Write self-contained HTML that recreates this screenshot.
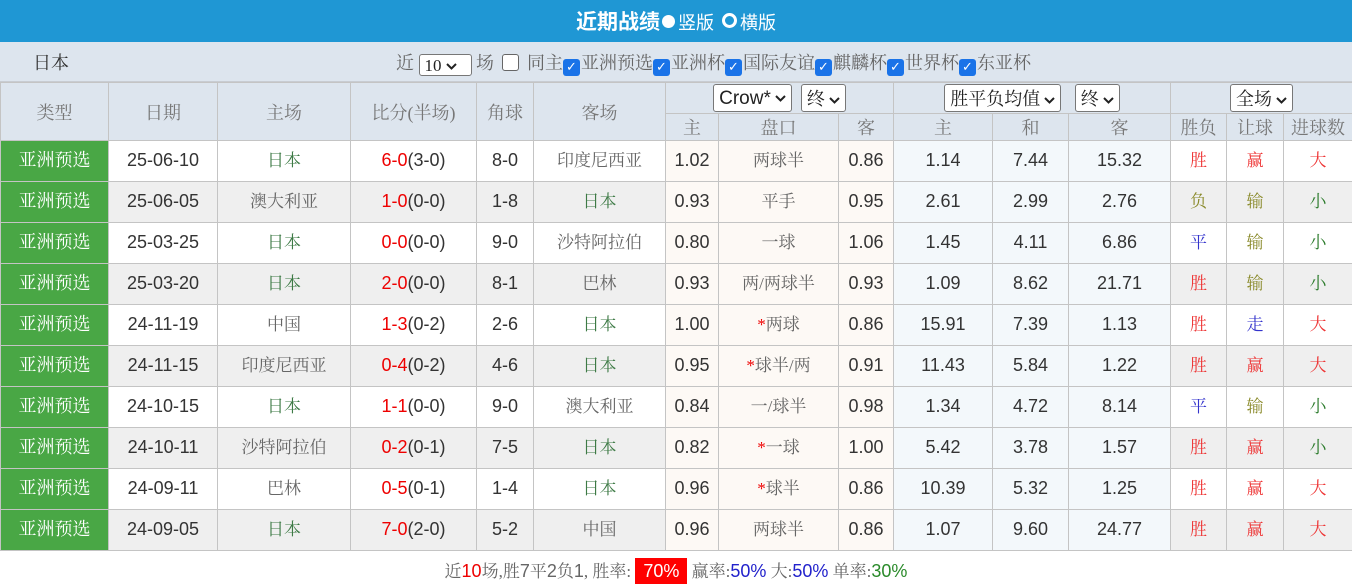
<!DOCTYPE html><html><head><meta charset="utf-8"><style>
body{margin:0;width:1352px;height:583px;overflow:hidden;background:#fff;font-family:"Liberation Sans","Noto Sans CJK SC",sans-serif;}
.top{height:42px;background:#1f97d4;color:#fff;text-align:center;line-height:42px;font-size:18px;}
.top b{font-size:21px;font-family:"Noto Sans CJK SC",sans-serif}
.dot{display:inline-block;width:13px;height:13px;border-radius:50%;background:#fff;vertical-align:1px;margin:0 3px 0 2px}
.ring{display:inline-block;width:9px;height:9px;border-radius:50%;border:3px solid #fff;background:#1f97d4;vertical-align:1px;margin:0 3px 0 8px}
.filter{height:40px;background:#dde5ee;position:relative;font-family:"Liberation Serif","Noto Serif CJK SC",serif;color:#666;font-size:18px;border-bottom:1px solid #c8ccd2;box-sizing:border-box}
.filter .t{position:absolute;left:33px;top:7px;color:#333}
.filter .r{position:absolute;left:396px;top:7px;white-space:nowrap}
.sel{display:inline-block;border:1px solid #777;border-radius:3px;background:#fff;color:#222;padding:0 5px;height:22px;line-height:22px;vertical-align:middle;font-size:15px;box-sizing:border-box}
.chev{display:inline-block;width:11px;height:7px;vertical-align:middle;margin-left:4px}
.cb{display:inline-block;width:17px;height:17px;border-radius:3px;background:#1a73e8;color:#fff;font-size:13px;line-height:17px;text-align:center;vertical-align:-2px;font-family:"DejaVu Sans",sans-serif;font-weight:bold;margin-right:1px}
.cb0{display:inline-block;width:17px;height:17px;border-radius:3px;border:1px solid #666;background:#fff;vertical-align:-2px;box-sizing:border-box;margin:0 8px}
table{border-collapse:collapse;table-layout:fixed;width:1352px;position:absolute;top:82px;left:0}
td{border:1px solid #c4c4c4;text-align:center;padding:0;font-size:18px;color:#333;white-space:nowrap;overflow:hidden}
.h td{background:#dde5ee;color:#777;font-family:"Liberation Serif","Noto Serif CJK SC",serif}
tr.d td{height:40px;line-height:38px;vertical-align:top}
tr.d td.zh{font-family:"Liberation Serif","Noto Serif CJK SC",serif;color:#666;font-size:17px;line-height:39px}
tr.d td.jp{color:#3d7a45}
tr.g td{background:#efefef}
tr.d td.ty{background:#49a745;color:#fff;font-family:"Liberation Serif","Noto Serif CJK SC",serif;line-height:39px}
tr.d td.o{background:#fdf9f5}
tr.d td.p{background:#f3f8fb}
.red{color:#e00}
tr.d td.w{color:#e33}tr.d td.l{color:#8a8a2a}tr.d td.dr{color:#33c}tr.d td.sm{color:#2a7a2a}
.foot{position:absolute;top:557px;left:0;width:1352px;text-align:center;font-size:17px;color:#666;font-family:"Liberation Serif","Noto Serif CJK SC",serif}
.foot .n{font-family:"Liberation Sans",sans-serif;font-size:18px}
</style></head><body>
<div class="top"><b>近期战绩</b><span class="dot"></span>竖版<span class="ring"></span>横版</div>
<div class="filter"><span class="t">日本</span><span class="r">近 <span class="sel" style="width:53px;font-size:17px">10<svg class="chev" viewBox="0 0 11 7"><path d="M1 1L5.5 5.5L10 1" stroke="#222" stroke-width="2" fill="none"/></svg></span> 场<span class="cb0"></span>同主<span class="cb">✓</span>亚洲预选<span class="cb">✓</span>亚洲杯<span class="cb">✓</span>国际友谊<span class="cb">✓</span>麒麟杯<span class="cb">✓</span>世界杯<span class="cb">✓</span>东亚杯</span></div>
<table>
<colgroup><col style="width:108px"><col style="width:109px"><col style="width:133px"><col style="width:126px"><col style="width:57px"><col style="width:132px"><col style="width:53px"><col style="width:120px"><col style="width:55px"><col style="width:99px"><col style="width:76px"><col style="width:102px"><col style="width:56px"><col style="width:57px"><col style="width:69px"></colgroup>
<tr class="h"><td rowspan="2" style="height:56px">类型</td><td rowspan="2">日期</td><td rowspan="2">主场</td><td rowspan="2">比分(半场)</td><td rowspan="2">角球</td><td rowspan="2">客场</td>
<td colspan="3" style="height:30px"><span class="sel" style="font-family:'Liberation Sans',sans-serif;height:28px;line-height:28px;font-size:19px;color:#222">Crow*<svg class="chev" viewBox="0 0 11 7"><path d="M1 1L5.5 5.5L10 1" stroke="#222" stroke-width="2" fill="none"/></svg></span> &nbsp;<span class="sel" style="height:28px;line-height:28px;font-size:18px">终<svg class="chev" viewBox="0 0 11 7"><path d="M1 1L5.5 5.5L10 1" stroke="#222" stroke-width="2" fill="none"/></svg></span></td>
<td colspan="3"><span class="sel" style="height:28px;line-height:28px;font-size:18px">胜平负均值<svg class="chev" viewBox="0 0 11 7"><path d="M1 1L5.5 5.5L10 1" stroke="#222" stroke-width="2" fill="none"/></svg></span> &nbsp;&nbsp;<span class="sel" style="height:28px;line-height:28px;font-size:18px">终<svg class="chev" viewBox="0 0 11 7"><path d="M1 1L5.5 5.5L10 1" stroke="#222" stroke-width="2" fill="none"/></svg></span></td>
<td colspan="3"><span class="sel" style="height:28px;line-height:28px;font-size:18px">全场<svg class="chev" viewBox="0 0 11 7"><path d="M1 1L5.5 5.5L10 1" stroke="#222" stroke-width="2" fill="none"/></svg></span></td></tr>
<tr class="h"><td style="height:25px">主</td><td>盘口</td><td>客</td><td>主</td><td>和</td><td>客</td><td>胜负</td><td>让球</td><td>进球数</td></tr>
<tr class="d"><td class="ty">亚洲预选</td><td>25-06-10</td><td class="zh jp">日本</td><td><span class="red">6-0</span>(3-0)</td><td>8-0</td><td class="zh">印度尼西亚</td><td class="o">1.02</td><td class="o zh">两球半</td><td class="o">0.86</td><td class="p">1.14</td><td class="p">7.44</td><td class="p">15.32</td><td class="zh w">胜</td><td class="zh w">赢</td><td class="zh w">大</td></tr>
<tr class="d g"><td class="ty">亚洲预选</td><td>25-06-05</td><td class="zh">澳大利亚</td><td><span class="red">1-0</span>(0-0)</td><td>1-8</td><td class="zh jp">日本</td><td class="o">0.93</td><td class="o zh">平手</td><td class="o">0.95</td><td class="p">2.61</td><td class="p">2.99</td><td class="p">2.76</td><td class="zh l">负</td><td class="zh l">输</td><td class="zh sm">小</td></tr>
<tr class="d"><td class="ty">亚洲预选</td><td>25-03-25</td><td class="zh jp">日本</td><td><span class="red">0-0</span>(0-0)</td><td>9-0</td><td class="zh">沙特阿拉伯</td><td class="o">0.80</td><td class="o zh">一球</td><td class="o">1.06</td><td class="p">1.45</td><td class="p">4.11</td><td class="p">6.86</td><td class="zh dr">平</td><td class="zh l">输</td><td class="zh sm">小</td></tr>
<tr class="d g"><td class="ty">亚洲预选</td><td>25-03-20</td><td class="zh jp">日本</td><td><span class="red">2-0</span>(0-0)</td><td>8-1</td><td class="zh">巴林</td><td class="o">0.93</td><td class="o zh">两/两球半</td><td class="o">0.93</td><td class="p">1.09</td><td class="p">8.62</td><td class="p">21.71</td><td class="zh w">胜</td><td class="zh l">输</td><td class="zh sm">小</td></tr>
<tr class="d"><td class="ty">亚洲预选</td><td>24-11-19</td><td class="zh">中国</td><td><span class="red">1-3</span>(0-2)</td><td>2-6</td><td class="zh jp">日本</td><td class="o">1.00</td><td class="o zh"><span class="red">*</span>两球</td><td class="o">0.86</td><td class="p">15.91</td><td class="p">7.39</td><td class="p">1.13</td><td class="zh w">胜</td><td class="zh dr">走</td><td class="zh w">大</td></tr>
<tr class="d g"><td class="ty">亚洲预选</td><td>24-11-15</td><td class="zh">印度尼西亚</td><td><span class="red">0-4</span>(0-2)</td><td>4-6</td><td class="zh jp">日本</td><td class="o">0.95</td><td class="o zh"><span class="red">*</span>球半/两</td><td class="o">0.91</td><td class="p">11.43</td><td class="p">5.84</td><td class="p">1.22</td><td class="zh w">胜</td><td class="zh w">赢</td><td class="zh w">大</td></tr>
<tr class="d"><td class="ty">亚洲预选</td><td>24-10-15</td><td class="zh jp">日本</td><td><span class="red">1-1</span>(0-0)</td><td>9-0</td><td class="zh">澳大利亚</td><td class="o">0.84</td><td class="o zh">一/球半</td><td class="o">0.98</td><td class="p">1.34</td><td class="p">4.72</td><td class="p">8.14</td><td class="zh dr">平</td><td class="zh l">输</td><td class="zh sm">小</td></tr>
<tr class="d g"><td class="ty">亚洲预选</td><td>24-10-11</td><td class="zh">沙特阿拉伯</td><td><span class="red">0-2</span>(0-1)</td><td>7-5</td><td class="zh jp">日本</td><td class="o">0.82</td><td class="o zh"><span class="red">*</span>一球</td><td class="o">1.00</td><td class="p">5.42</td><td class="p">3.78</td><td class="p">1.57</td><td class="zh w">胜</td><td class="zh w">赢</td><td class="zh sm">小</td></tr>
<tr class="d"><td class="ty">亚洲预选</td><td>24-09-11</td><td class="zh">巴林</td><td><span class="red">0-5</span>(0-1)</td><td>1-4</td><td class="zh jp">日本</td><td class="o">0.96</td><td class="o zh"><span class="red">*</span>球半</td><td class="o">0.86</td><td class="p">10.39</td><td class="p">5.32</td><td class="p">1.25</td><td class="zh w">胜</td><td class="zh w">赢</td><td class="zh w">大</td></tr>
<tr class="d g"><td class="ty">亚洲预选</td><td>24-09-05</td><td class="zh jp">日本</td><td><span class="red">7-0</span>(2-0)</td><td>5-2</td><td class="zh">中国</td><td class="o">0.96</td><td class="o zh">两球半</td><td class="o">0.86</td><td class="p">1.07</td><td class="p">9.60</td><td class="p">24.77</td><td class="zh w">胜</td><td class="zh w">赢</td><td class="zh w">大</td></tr>
</table>
<div class="foot">近<span class="n" style="color:#e00">10</span>场,胜<span class="n">7</span>平<span class="n">2</span>负<span class="n">1</span>, 胜率: <span class="n" style="background:#f00;color:#fff;padding:3px 8px">70%</span> 赢率:<span class="n" style="color:#22c">50%</span> 大:<span class="n" style="color:#22c">50%</span> 单率:<span class="n" style="color:#2a8a2a">30%</span></div>
</body></html>
